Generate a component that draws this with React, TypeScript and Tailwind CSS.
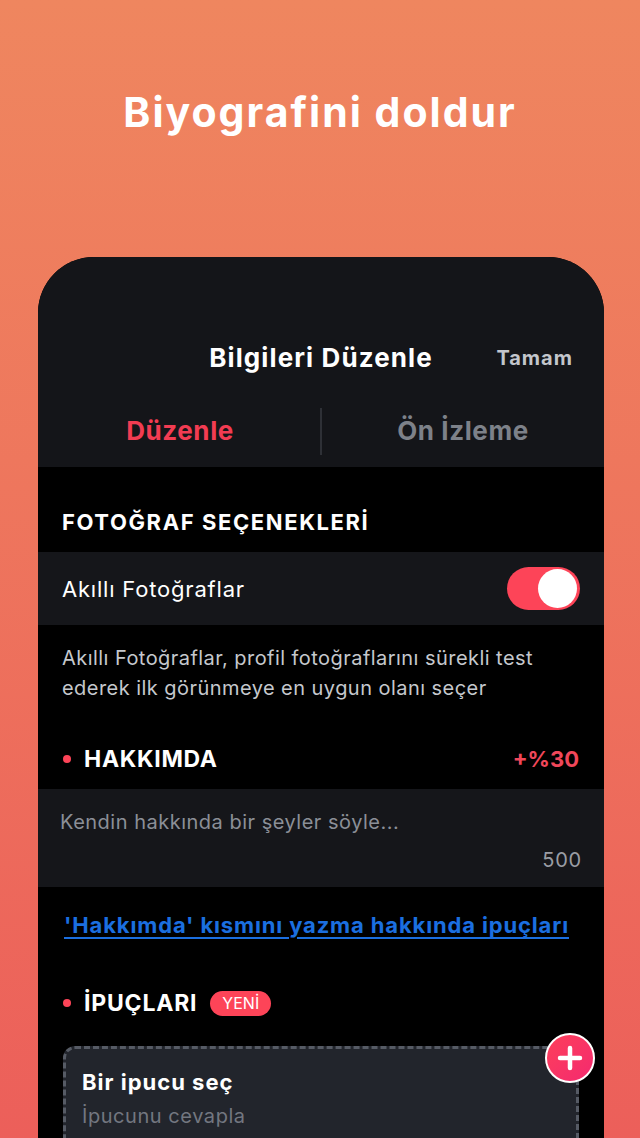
import React from 'react';

const App = () => {
  return (
    <div
      className="w-[640px] h-[1138px] overflow-hidden bg-gradient-to-b from-[#ef865f] to-[#ec5f5a]"
      style={{ fontFamily: 'Inter, "Noto Sans", sans-serif' }}
    >
      {/* Title */}
      <div className="h-[257px] pt-[84px] flex justify-center">
        <h1 className="text-white text-[41px] font-bold leading-[56px] tracking-[2px]">Biyografini doldur</h1>
      </div>

      {/* Phone */}
      <div className="ml-[38px] mr-[36px] h-[881px] rounded-t-[56px] bg-black overflow-hidden">
        {/* Header */}
        <div className="bg-[#141519] h-[210px] flex flex-col">
          <div className="h-[150px] shrink-0 pt-[84px] relative flex justify-center">
            <span className="text-white text-[26px] font-bold leading-[34px] tracking-[1.1px]">Bilgileri Düzenle</span>
            <span className="absolute right-[31px] top-[88px] text-[#c3c6cc] text-[20px] font-bold leading-[26px] tracking-[1px]">Tamam</span>
          </div>
          <div className="flex items-center h-[48px] shrink-0">
            <div className="flex-1 flex justify-center">
              <span className="text-[#f23c52] text-[26px] font-bold leading-[34px] tracking-[0.6px] pl-[2px]">Düzenle</span>
            </div>
            <div className="w-[2px] h-[47px] bg-[#2e3036]" />
            <div className="flex-1 flex justify-center">
              <span className="text-[#7d8189] text-[26px] font-bold leading-[34px] tracking-[0.6px]">Ön İzleme</span>
            </div>
          </div>
        </div>

        {/* Photo options */}
        <div className="px-[24px] pt-[40px] pb-[15px]">
          <span className="text-white text-[22px] font-bold leading-[30px] tracking-[1.6px]">FOTOĞRAF SEÇENEKLERİ</span>
        </div>
        <div className="bg-[#15161a] h-[73px] px-[24px] flex items-center justify-between">
          <span className="text-white text-[22px] leading-[30px] tracking-[0.8px]">Akıllı Fotoğraflar</span>
          <div className="w-[73px] h-[43px] rounded-full bg-[#fd4458] flex items-center justify-end pr-[3px]">
            <div className="w-[39px] h-[39px] rounded-full bg-white" />
          </div>
        </div>
        <p className="px-[24px] pt-[18px] text-[#c5c8cd] text-[20px] leading-[30px] tracking-[0.45px]">
          Akıllı Fotoğraflar, profil fotoğraflarını sürekli test
          <br />
          ederek ilk görünmeye en uygun olanı seçer
        </p>

        {/* About */}
        <div className="px-[24px] pt-[41px] pb-[15px] flex items-center justify-between">
          <div className="flex items-center">
            <div className="w-[8px] h-[8px] rounded-full bg-[#fd4458] mr-[13px] ml-[1px]" />
            <span className="text-white text-[23px] font-bold leading-[30px] tracking-[0.7px]">HAKKIMDA</span>
          </div>
          <span className="text-[#f0475a] text-[22px] font-bold leading-[30px] pr-[1px]">+%30</span>
        </div>
        <div className="bg-[#15161a] h-[98px] px-[22px] pt-[19px] flex flex-col">
          <span className="text-[#8b8f97] text-[20px] leading-[28px] tracking-[0.5px]">Kendin hakkında bir şeyler söyle...</span>
          <span className="self-end text-[#9a9da4] text-[20px] leading-[28px] tracking-[0.8px] mt-[10px]">500</span>
        </div>
        <div className="px-[26px] pt-[22px]">
          <span className="text-[#1b6fe0] text-[22px] font-bold leading-[32px] tracking-[0.85px] underline underline-offset-[4px]">
            'Hakkımda' kısmını yazma hakkında ipuçları
          </span>
        </div>

        {/* Tips */}
        <div className="px-[24px] pt-[47px] flex items-center">
          <div className="w-[8px] h-[8px] rounded-full bg-[#fd4458] mr-[13px] ml-[1px]" />
          <span className="text-white text-[23px] font-bold leading-[30px] tracking-[0.8px]">İPUÇLARI</span>
          <span className="ml-[13px] bg-[#fd4458] text-white text-[16px] leading-[25px] px-[12px] rounded-full">YENİ</span>
        </div>
        <div className="px-[25px] pt-[28px] relative">
          <div className="border-[3px] border-dashed border-[#565b65] rounded-[12px] bg-[#22252c] px-[16px] pt-[18px] pb-[30px]">
            <div className="text-white text-[22px] font-bold leading-[30px] tracking-[1px]">Bir ipucu seç</div>
            <div className="text-[#737780] text-[20px] leading-[30px] tracking-[0.55px] mt-[4px]">İpucunu cevapla</div>
          </div>
          <div className="absolute right-[9px] top-[15px] w-[50px] h-[50px] rounded-full border-[2px] border-white bg-gradient-to-br from-[#fd3f5a] to-[#f4286f] flex items-center justify-center">
            <svg width="26" height="26" viewBox="0 0 26 26">
              <path d="M13 3v20M3 13h20" stroke="white" strokeWidth="4.5" strokeLinecap="round" />
            </svg>
          </div>
        </div>
      </div>
    </div>
  );
};

export default App;
